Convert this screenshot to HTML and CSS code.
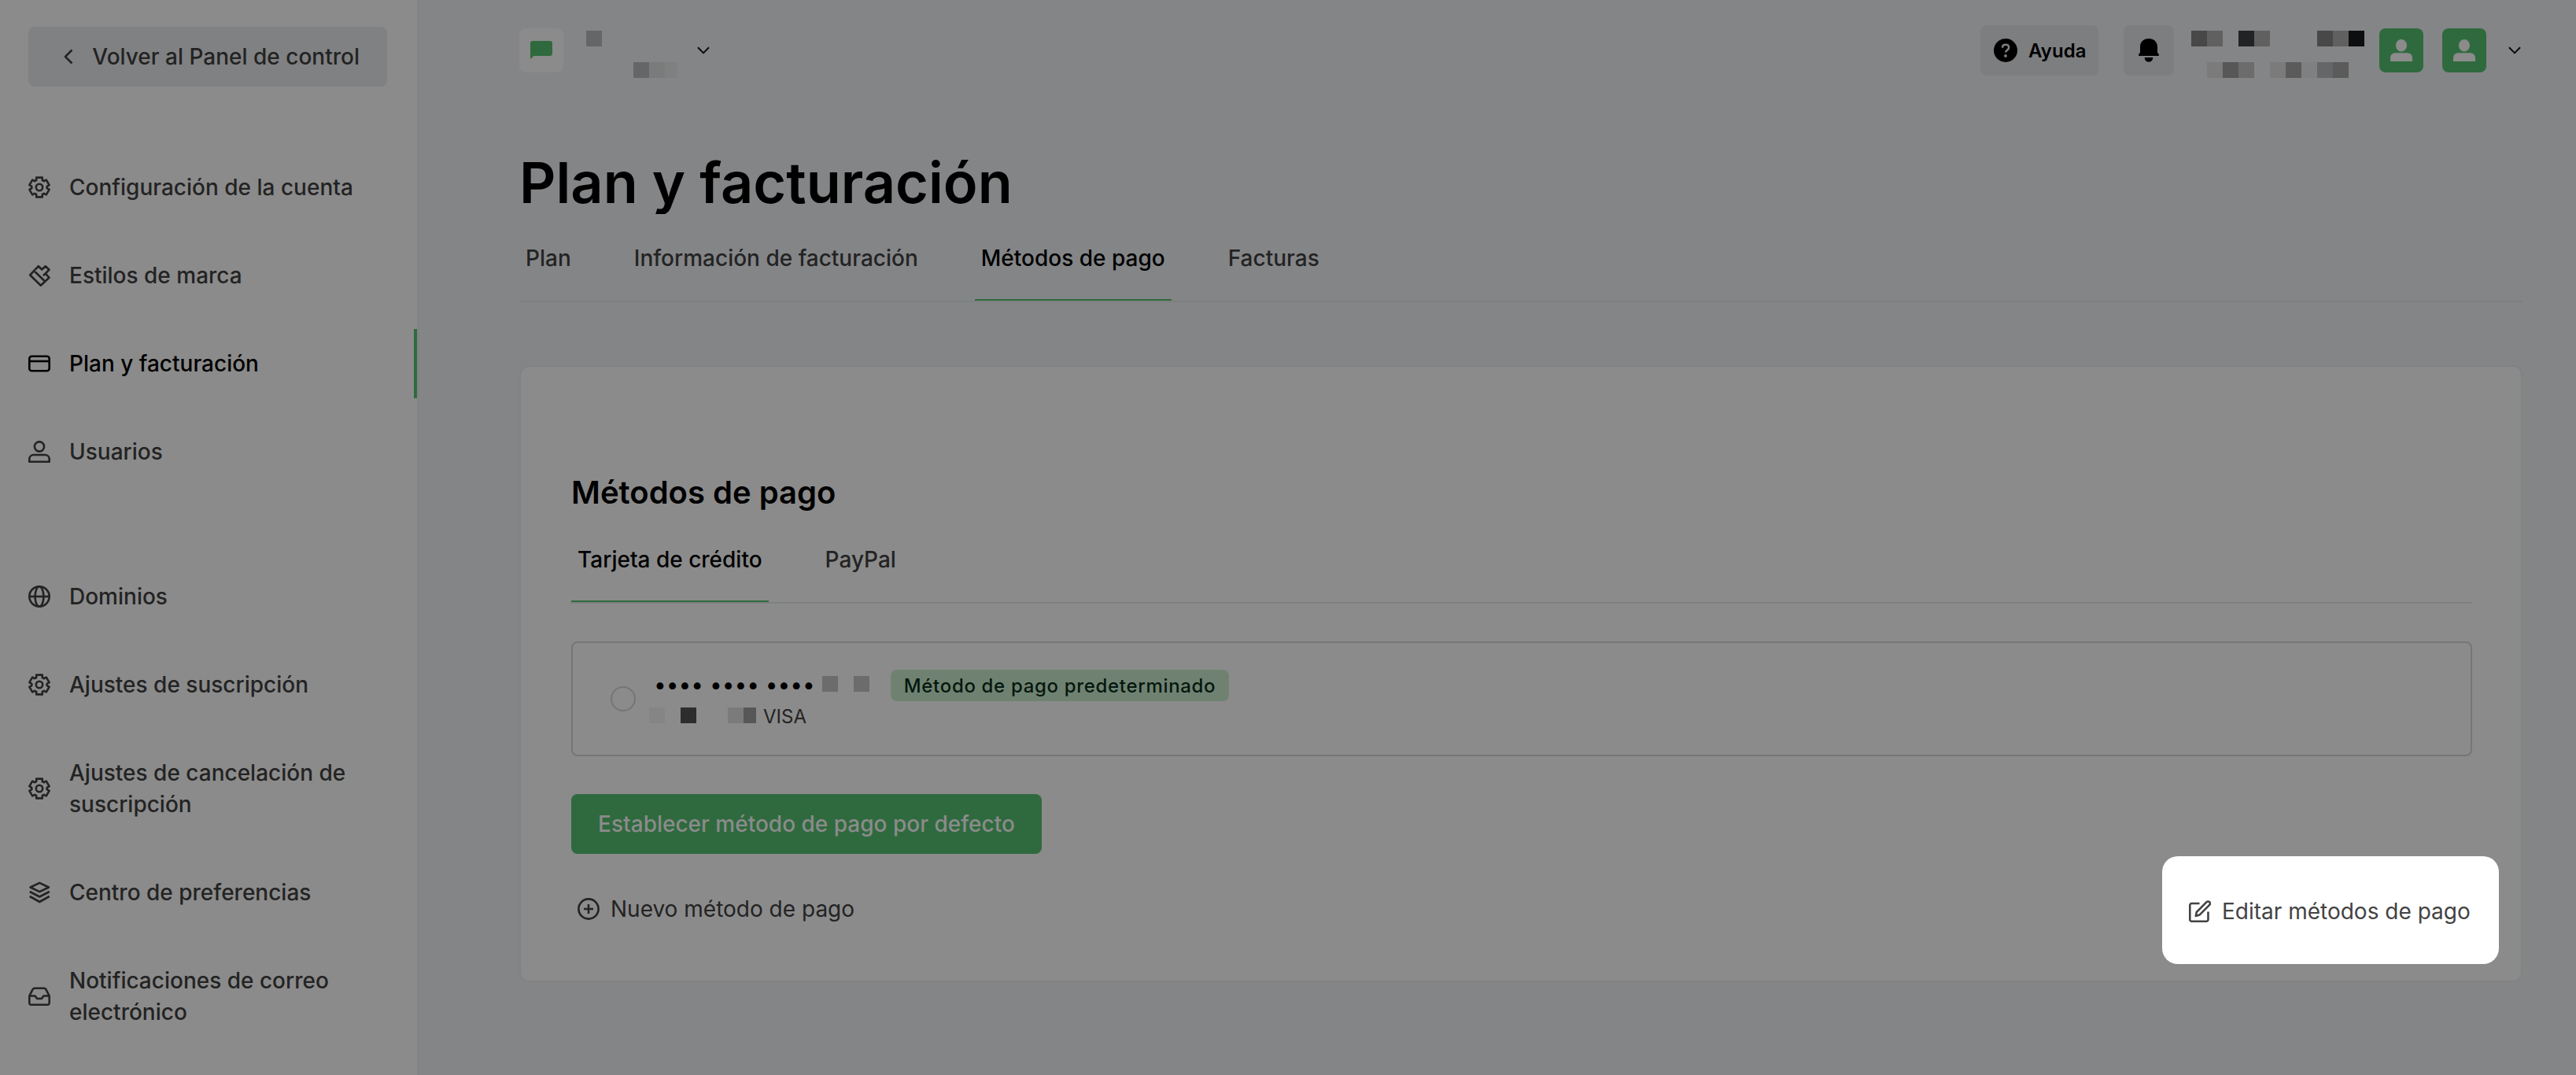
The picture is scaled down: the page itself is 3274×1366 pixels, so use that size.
FILE: index.html
```html
<!DOCTYPE html>
<html lang="es">
<head>
    <meta charset="UTF-8">
    <meta name="viewport" content="width=device-width, initial-scale=1.0">
    <title>Plan y facturación</title>
    <link rel="stylesheet" href="styles.css">
</head>
<body>
    <svg class="sprite" width="0" height="0">
        <symbol id="gear" viewBox="0 0 28 28">
            <path d="M10.2 1.6h7.6V5l2.1 1.2 2.9-1.6 3.8 6.5-2.9 1.7v2.4l2.9 1.7-3.8 6.5-2.9-1.6-2.1 1.2v3.4h-7.6V23l-2.1-1.2-2.9 1.6-3.8-6.5 2.9-1.7v-2.4l-2.9-1.7 3.8-6.5 2.9 1.6L10.2 5z"/>
            <circle cx="14" cy="14" r="4.2"/>
        </symbol>
        <symbol id="chevron" viewBox="0 0 16 10">
            <path d="M1 1.2l7 7.2 7-7.2"/>
        </symbol>
        <symbol id="person" viewBox="0 0 28 28">
            <path d="M14 0a7 7.8 0 0 1 0 15.600a7 7.800 0 0 1 0-15.600zM6 17.200h16a6 6 0 0 1 6 6V28H0v-4.800a6 6 0 0 1 6-6z"/>
        </symbol>
    </svg>

    <div class="layout">
        <aside class="sidebar">
            <a class="back-btn">
                <svg class="back-icon" viewBox="0 0 12 20"><path d="M10.500 1.500L2 10l8.500 8.500"/></svg>
                Volver al Panel de control
            </a>
            <nav class="menu">
                <a class="menu-item"><svg class="icon"><use href="#gear"/></svg><span>Configuración de la cuenta</span></a>
                <a class="menu-item">
                    <svg class="icon" viewBox="0 0 28 28"><path d="M2.200 13.500L12.900 2.200l4.400 4.300 4.500-4.200 4.700 4.400-4.600 4.800 4.600 5.300-10.700 10zM7.500 8.300l13.800 13.400M21.900 11.500l-3 2.800"/></svg>
                    <span>Estilos de marca</span>
                </a>
                <a class="menu-item active">
                    <svg class="icon" viewBox="0 0 28 28"><rect x="1.300" y="4.800" width="25.400" height="18.400" rx="3"/><path d="M1.300 11h25.400"/></svg>
                    <span>Plan y facturación</span>
                </a>
                <a class="menu-item">
                    <svg class="icon" viewBox="0 0 28 28"><circle cx="14" cy="7.500" r="6.100"/><path d="M1.300 26.700v-3.200c0-3.200 2.300-5.500 5.500-5.500h14.400c3.200 0 5.500 2.300 5.500 5.500v3.200z"/></svg>
                    <span>Usuarios</span>
                </a>
            </nav>
            <nav class="menu menu-extra">
                <a class="menu-item">
                    <svg class="icon" viewBox="0 0 28 28"><circle cx="14" cy="14" r="12.700"/><ellipse cx="14" cy="14" rx="5.400" ry="12.700"/><path d="M1.300 14h25.400"/></svg>
                    <span>Dominios</span>
                </a>
                <a class="menu-item"><svg class="icon"><use href="#gear"/></svg><span>Ajustes de suscripción</span></a>
                <a class="menu-item"><svg class="icon"><use href="#gear"/></svg><span>Ajustes de cancelación de suscripción</span></a>
                <a class="menu-item">
                    <svg class="icon" viewBox="0 0 28 28"><path d="M14.300 1.800L26 7.500l-11.700 5.700L2.600 7.500zM1.800 13l12.500 6.500L26.800 13M1.800 19l12.500 7 12.500-7"/></svg>
                    <span>Centro de preferencias</span>
                </a>
                <a class="menu-item">
                    <svg class="icon" viewBox="0 0 28 28"><path d="M1.300 13.500L5.500 5.300a3 3 0 0 1 2.500-1.500h12a3 3 0 0 1 2.500 1.500l4.200 8.200v9a2.200 2.200 0 0 1-2.200 2.200h-21a2.200 2.200 0 0 1-2.200-2.200zh7c1.500 0 1.500 3.500 3.500 3.500h4.400c2 0 2-3.500 3.500-3.500h7"/></svg>
                    <span>Notificaciones de correo electrónico</span>
                </a>
            </nav>
        </aside>

        <main class="main">
            <header class="topbar">
                <div class="workspace">
                    <div class="workspace-logo">
                        <svg viewBox="0 0 28 23"><path d="M3 0h22a3 3 0 0 1 3 3v13a3 3 0 0 1-3 3H4.500L0 23V3a3 3 0 0 1 3-3z"/></svg>
                    </div>
                    <div class="redacted workspace-name">
                        <div class="px-row"><i class="p65"></i></div>
                        <div class="px-row"><i></i><i></i><i></i><i class="p65"></i><i class="p7b"></i><i class="p80 short"></i></div>
                    </div>
                    <svg class="chevron"><use href="#chevron"/></svg>
                </div>
                <div class="topbar-right">
                    <a class="help-btn">
                        <svg viewBox="0 0 30 30"><circle cx="15" cy="15" r="15"/><path class="mark" d="M11 11.800c0-2.400 1.700-4 4.100-4s4.100 1.500 4.100 3.700c0 3.200-4.100 3-4.100 6"/><circle class="mark-dot" cx="15" cy="22" r="1.900"/></svg>
                        Ayuda
                    </a>
                    <a class="bell-btn">
                        <svg viewBox="0 0 26 30"><path d="M13 0c6 0 11 4 11 10.500v7l1.800 2.800c.5 1-.1 1.700-1 1.700H1.200c-.9 0-1.500-.7-1-1.700L2 17.500v-7C2 4 7 0 13 0zM7.700 24h10.600c0 3.500-2.200 5.700-5.300 5.700s-5.300-2.200-5.300-5.700z"/></svg>
                    </a>
                    <div class="redacted user-name">
                        <div class="px-row"><i class="p48"></i><i class="p60"></i><i></i><i class="p22"></i><i class="p60"></i><i></i><i></i><i></i><i class="p48"></i><i class="p60"></i><i class="p0d"></i></div>
                        <div class="px-row"><i></i><i class="p7b"></i><i class="p57"></i><i class="p6c"></i><i></i><i class="p7b"></i><i class="p5b"></i><i class="p80"></i><i class="p65"></i><i class="p5b"></i></div>
                    </div>
                    <div class="avatar"><svg><use href="#person"/></svg></div>
                    <div class="avatar"><svg><use href="#person"/></svg></div>
                    <svg class="chevron"><use href="#chevron"/></svg>
                </div>
            </header>

            <h1 class="title">Plan y facturación</h1>
            <div class="tabs">
                <a class="tab">Plan</a>
                <a class="tab">Información de facturación</a>
                <a class="tab active">Métodos de pago</a>
                <a class="tab">Facturas</a>
            </div>

            <section class="card">
                <h2 class="card-title">Métodos de pago</h2>
                <div class="tabs">
                    <a class="tab active">Tarjeta de crédito</a>
                    <a class="tab">PayPal</a>
                </div>
                <div class="payment">
                    <span class="radio"></span>
                    <div class="payment-info">
                        <div class="payment-line">
                            <span class="dots">•••• •••• ••••</span>
                            <div class="px-row"><i class="p6c"></i><i></i><i class="p6c"></i></div>
                            <span class="badge">Método de pago predeterminado</span>
                        </div>
                        <div class="payment-line">
                            <div class="px-row"><i class="p85"></i><i></i><i class="p2d"></i><i></i><i></i><i class="p7b"></i><i class="p57 short"></i></div>
                            <span class="brand">VISA</span>
                        </div>
                    </div>
                </div>
                <button class="primary-btn">Establecer método de pago por defecto</button>
                <div class="card-actions">
                    <a class="action">
                        <svg class="icon" viewBox="0 0 28 28"><circle cx="14" cy="14" r="12.600"/><path d="M14 8v12M8 14h12"/></svg>
                        <span>Nuevo método de pago</span>
                    </a>
                    <a class="action highlight">
                        <svg class="icon" viewBox="0 0 28 28"><path d="M13.500 4H3.500a2.200 2.200 0 0 0-2.200 2.200v18.300a2.200 2.200 0 0 0 2.200 2.200h18.800a2.200 2.200 0 0 0 2.200-2.200V14.500M8.800 20l1-5L22.500 2.200a2.600 2.600 0 0 1 3.700 3.700L13.500 18.600z"/></svg>
                        <span>Editar métodos de pago</span>
                    </a>
                </div>
            </section>
        </main>
    </div>
</body>
</html>
```
FILE: styles.css
```css
* {
    box-sizing: border-box;
}
body {
    margin: 0;
    font-family: Inter, sans-serif;
    font-size: 28px;
    background: #848587;
    color: #232323;
    overflow: hidden;
}
.sprite {
    display: block;
}
.layout {
    display: flex;
    height: 1366px;
    overflow: hidden;
}

/* Sidebar */
.sidebar {
    width: 532px;
    flex-shrink: 0;
    padding: 34px 0 0;
    background: #8b8b8b;
    border-right: 2px solid #818283;
    font-weight: 500;
}
.back-btn {
    display: flex;
    align-items: center;
    justify-content: flex-end;
    gap: 24px;
    width: 456px;
    height: 76px;
    margin-left: 36px;
    padding-right: 35px;
    border-radius: 8px;
    background: #808182;
}
.back-icon {
    width: 12px;
    height: 20px;
}
.menu {
    display: flex;
    flex-direction: column;
    gap: 24px;
    margin-top: 84px;
}
.menu-extra {
    margin-top: 96px;
}
.menu-item {
    display: flex;
    align-items: center;
    gap: 24px;
    padding: 24px 40px 24px 36px;
    line-height: 40px;
    border-right: 4px solid transparent;
}
.menu-item.active {
    color: #000;
    border-right-color: #2f6a3e;
}
.icon {
    width: 28px;
    height: 28px;
    flex-shrink: 0;
}
.icon, .back-icon, .chevron {
    fill: none;
    stroke: currentColor;
    stroke-width: 2.6;
    stroke-linejoin: round;
}

/* Top bar */
.main {
    flex: 1;
    padding: 32px 68px 0 128px;
}
.topbar {
    display: flex;
    justify-content: space-between;
    align-items: center;
    height: 64px;
}
.workspace, .topbar-right {
    display: flex;
    align-items: center;
}
.workspace-logo {
    width: 56px;
    height: 56px;
    padding: 16px 14px;
    border-radius: 8px;
    background: #8b8b8b;
}
.workspace-logo svg {
    display: block;
    width: 28px;
    height: 23px;
    fill: #2f6a3e;
}
.chevron {
    width: 16px;
    height: 10px;
    stroke-width: 2;
    color: #0b0b0c;
}
.redacted {
    display: flex;
    flex-direction: column;
    gap: 20px;
    margin-top: 10px;
}
.workspace-name {
    width: 116px;
    margin-left: 29px;
    margin-right: 25px;
}
.user-name {
    margin-left: 22px;
    margin-right: 19px;
}
.px-row {
    display: flex;
}
.px-row i {
    width: 20px;
    height: 20px;
}
.px-row .short {
    width: 16px;
}
.p0d { background: #0d0e0f; }
.p22 { background: #222324; }
.p2d { background: #2d2d2d; }
.p48 { background: #484849; }
.p57 { background: #575758; }
.p5b { background: #5b5b5b; }
.p60 { background: #606060; }
.p65 { background: #656667; }
.p6c { background: #6c6c6d; }
.p7b { background: #7b7b7b; }
.p80 { background: #7f8081; }
.p85 { background: #858585; }
.help-btn {
    display: flex;
    align-items: center;
    gap: 14px;
    width: 150px;
    height: 64px;
    padding-left: 17px;
    border-radius: 8px;
    background: #7d7e7f;
    color: #000;
    font-size: 24px;
    font-weight: 600;
}
.help-btn svg {
    width: 30px;
    height: 30px;
}
.mark {
    fill: none;
    stroke: #7d7e7f;
    stroke-width: 2.6;
}
.mark-dot {
    fill: #7d7e7f;
}
.bell-btn {
    display: flex;
    align-items: center;
    justify-content: center;
    width: 64px;
    height: 64px;
    margin-left: 32px;
    border-radius: 8px;
    background: #7d7e7f;
}
.bell-btn svg {
    width: 26px;
    height: 30px;
}
.avatar {
    display: flex;
    align-items: center;
    justify-content: center;
    width: 56px;
    height: 56px;
    margin-right: 24px;
    border-radius: 8px;
    background: #2f6a3e;
}
.avatar svg {
    width: 28px;
    height: 28px;
    fill: #8b8b8b;
}
.topbar-right .chevron {
    margin-left: 4px;
    margin-right: 2px;
}

/* Headings and tabs */
.title {
    height: 88px;
    margin: 88px 0 0;
    overflow: hidden;
    color: #000;
    font-size: 72px;
    font-weight: 600;
    line-height: 95px;
}
.tabs {
    display: flex;
    gap: 64px;
    border-bottom: 2px solid #7e7f80;
    font-weight: 500;
}
.tab {
    height: 110px;
    padding: 36px 8px 0;
    line-height: 40px;
}
.tab.active {
    color: #000;
    border-bottom: 2px solid #2f6a3e;
}

/* Card */
.card {
    height: 784px;
    margin-top: 80px;
    padding: 130px 62px 0 64px;
    border: 2px solid #818283;
    border-radius: 12px;
    background: #8b8b8b;
}
.card-title {
    margin: 0;
    color: #000;
    font-size: 40px;
    font-weight: 600;
    line-height: 60px;
}
.card .tab {
    height: 109px;
    padding-top: 35px;
}
.payment {
    display: flex;
    align-items: center;
    gap: 17px;
    height: 146px;
    margin-top: 48px;
    padding-left: 48px;
    border: 2px solid #757677;
    border-radius: 8px;
}
.radio {
    width: 32px;
    height: 32px;
    border: 2px solid #747575;
    border-radius: 50%;
}
.payment-info {
    height: 74px;
}
.payment-line {
    display: flex;
    align-items: center;
    height: 40px;
    font-size: 24px;
}
.payment-line .px-row {
    margin-bottom: 4px;
}
.dots {
    width: 220px;
    margin-bottom: 3px;
    padding-left: 6px;
    color: #000;
    font-size: 28px;
}
.badge {
    display: flex;
    align-items: center;
    justify-content: center;
    width: 430px;
    height: 40px;
    margin-left: 27px;
    border-radius: 8px;
    background: #6f8272;
    color: #06170d;
    font-weight: 500;
    letter-spacing: 0.67px;
}
.brand {
    margin-left: 9px;
    margin-bottom: 2px;
}
.primary-btn {
    display: block;
    width: 598px;
    height: 76px;
    margin-top: 48px;
    padding: 0;
    border: none;
    border-radius: 8px;
    background: #2f6a3e;
    color: #8b8b8b;
    font-family: inherit;
    font-size: 28px;
    font-weight: 500;
}
.card-actions {
    display: flex;
    justify-content: space-between;
    align-items: flex-start;
}
.action {
    display: flex;
    align-items: center;
    gap: 14px;
    margin: 50px 0 0 8px;
    line-height: 40px;
}
.action.highlight {
    width: 428px;
    height: 137px;
    margin: 3px -34px 0 0;
    padding: 3px 0 0 34px;
    border-radius: 20px;
    background: #fff;
    color: #434343;
}
```
